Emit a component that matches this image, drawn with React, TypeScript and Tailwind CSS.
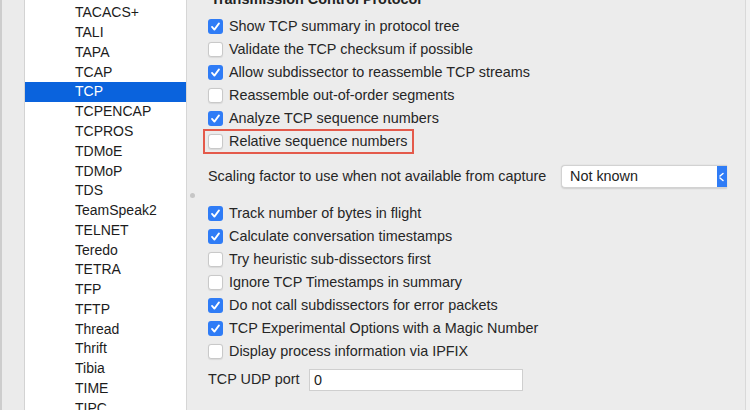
import React from "react";

const protocols = [
  "TACACS+",
  "TALI",
  "TAPA",
  "TCAP",
  "TCP",
  "TCPENCAP",
  "TCPROS",
  "TDMoE",
  "TDMoP",
  "TDS",
  "TeamSpeak2",
  "TELNET",
  "Teredo",
  "TETRA",
  "TFP",
  "TFTP",
  "Thread",
  "Thrift",
  "Tibia",
  "TIME",
  "TIPC",
];

const topOptions = [
  { label: "Show TCP summary in protocol tree", checked: true },
  { label: "Validate the TCP checksum if possible", checked: false },
  { label: "Allow subdissector to reassemble TCP streams", checked: true },
  { label: "Reassemble out-of-order segments", checked: false },
  { label: "Analyze TCP sequence numbers", checked: true },
];

const bottomOptions = [
  { label: "Track number of bytes in flight", checked: true },
  { label: "Calculate conversation timestamps", checked: true },
  { label: "Try heuristic sub-dissectors first", checked: false },
  { label: "Ignore TCP Timestamps in summary", checked: false },
  { label: "Do not call subdissectors for error packets", checked: true },
  { label: "TCP Experimental Options with a Magic Number", checked: true },
  { label: "Display process information via IPFIX", checked: false },
];

function Checkbox({ checked }: { checked: boolean }) {
  if (checked) {
    return (
      <span className="w-[15px] h-[15px] rounded-[3px] bg-[#2f7cf6] flex items-center justify-center shrink-0">
        <svg width="15" height="15" viewBox="0 0 15 15">
          <path
            d="M4 7.9 L6.4 10.6 L11 4.4"
            fill="none"
            stroke="white"
            strokeWidth="1.8"
            strokeLinecap="round"
            strokeLinejoin="round"
          />
        </svg>
      </span>
    );
  }
  return (
    <span className="w-[15px] h-[15px] rounded-[3px] bg-white border border-[#c9c9c9] shadow-[0_0.5px_1px_rgba(0,0,0,0.08)] shrink-0" />
  );
}

function OptionRow({ label, checked }: { label: string; checked: boolean }) {
  return (
    <div className="h-[23px] flex items-center gap-[6px]">
      <Checkbox checked={checked} />
      <span className="text-[14.4px] text-[#262626] whitespace-nowrap pt-px">{label}</span>
    </div>
  );
}

export default function App() {
  return (
    <div className="w-[750px] h-[410px] overflow-hidden flex bg-[#ececec] font-['Liberation_Sans',Arial,sans-serif]">
      {/* left edge strip */}
      <div className="w-[25px] h-full border-l-2 border-[#cdcdcd] border-r border-r-[#d3d3d3] bg-[#ebebeb] shrink-0" />

      {/* protocol list */}
      <div className="w-[162px] h-full bg-white border-r border-[#d6d6d6] shrink-0 pt-[3px]">
        {protocols.map((p) => (
          <div
            key={p}
            className={`h-[19.77px] flex items-center pl-[50px] text-[14px] ${
              p === "TCP" ? "bg-[#0a63dd] text-white" : "text-[#1c1c1c]"
            }`}
          >
            {p}
          </div>
        ))}
      </div>

      {/* preferences panel */}
      <div className="relative flex-1 h-full pl-[21px] border-r border-[#d9d9d9]">
        <span className="absolute left-[3px] top-[193px] w-[5px] h-[5px] rounded-full bg-[#c6c6c6]" />

        <div className="-mt-[9px] h-4 leading-4 text-[14.4px] font-bold text-[#222] pl-[3px] whitespace-nowrap">
          Transmission Control Protocol
        </div>

        <div className="mt-[8px] flex flex-col">
          {topOptions.map((o) => (
            <OptionRow key={o.label} label={o.label} checked={o.checked} />
          ))}
          {/* highlighted row */}
          <div className="-ml-[5px] -my-[1px] w-[211px] h-[25px] border-2 border-[#e45a4b] pl-[3px] flex items-center">
            <OptionRow label="Relative sequence numbers" checked={false} />
          </div>
        </div>

        <div className="mt-[12px] h-[23px] flex items-center">
          <span className="w-[353px] text-[14.4px] text-[#262626] whitespace-nowrap">
            Scaling factor to use when not available from capture
          </span>
          <div className="w-[166px] h-[23px] flex bg-white rounded-l-[4px] border border-r-0 border-[#d2d2d2] shadow-[0_0.5px_1.5px_rgba(0,0,0,0.12)] overflow-hidden">
            <span className="flex-1 pl-[8px] text-[14.4px] text-[#222] leading-[21px]">Not known</span>
            <span className="w-[10px] h-full bg-[#2f7cf6] flex items-center">
              <svg width="10" height="21" viewBox="0 0 10 21">
                <path
                  d="M6 7.5 L3 10 M3 12 L6 14.5"
                  fill="none"
                  stroke="white"
                  strokeWidth="1.5"
                  strokeLinecap="round"
                />
              </svg>
            </span>
          </div>
        </div>

        <div className="mt-[14px] flex flex-col">
          {bottomOptions.map((o) => (
            <OptionRow key={o.label} label={o.label} checked={o.checked} />
          ))}
        </div>

        <div className="mt-[6px] h-[22px] flex items-center">
          <span className="w-[101px] text-[14.4px] text-[#262626] whitespace-nowrap">TCP UDP port</span>
          <div className="w-[214px] h-[22px] bg-white border border-[#cfcfcf] pl-[4px] text-[14.4px] text-[#222] leading-[20px]">
            0
          </div>
        </div>
      </div>

      <div className="w-[4px] h-full bg-[#f1f1f1] shrink-0" />
    </div>
  );
}
